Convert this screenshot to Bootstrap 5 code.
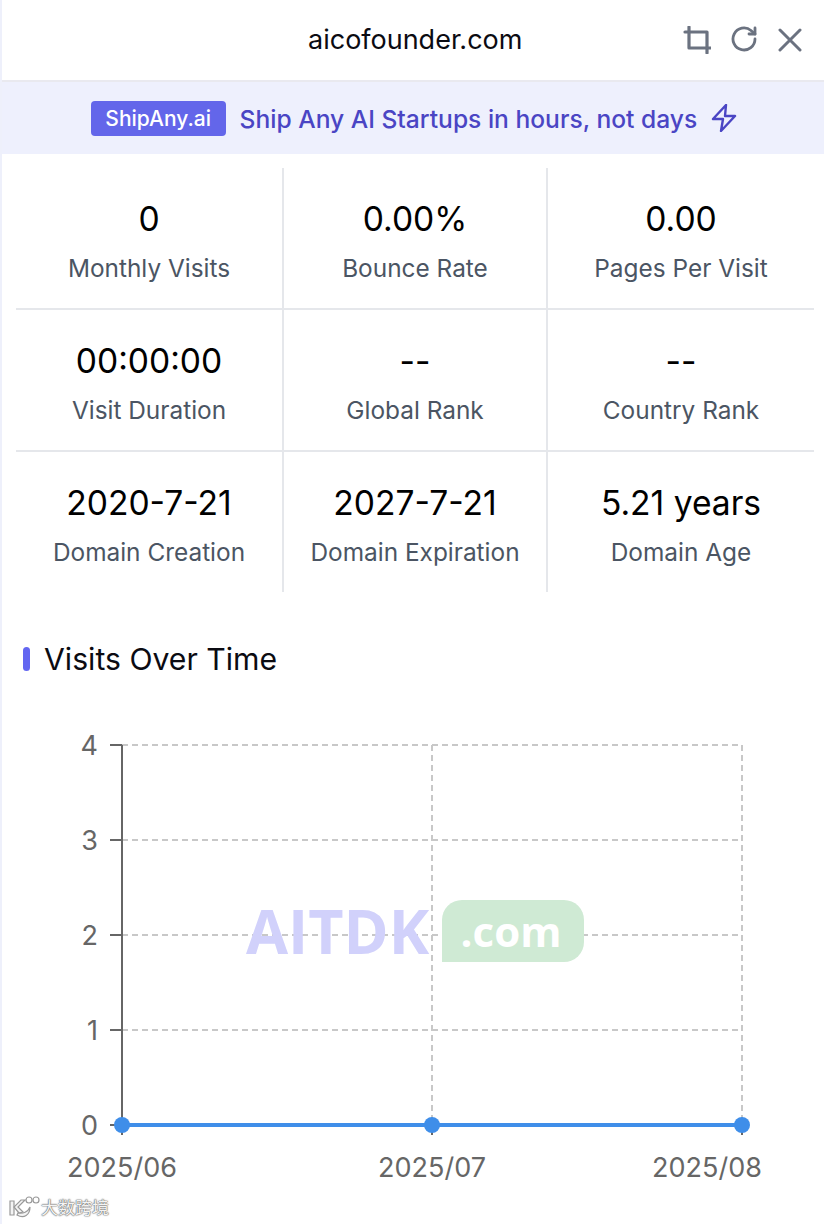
<!DOCTYPE html>
<html lang="en">

<head>
    <meta charset="utf-8">
    <title>aicofounder.com</title>
    <link rel="stylesheet" href="https://cdn.jsdelivr.net/npm/bootstrap@5.3.0/dist/css/bootstrap.min.css">
    <style>
        html, body { height: 100%; }
        body { font-family: Inter, "Noto Sans", sans-serif; background: #fff; color: #000; overflow: hidden; }
        .shell { position: relative; height: 1224px; border-left: 2px solid #eef0fb; }
        .top-bar { height: 82px; border-bottom: 2px solid #e9e9ef; padding-right: 21px; position: relative; }
        .top-title { position: absolute; left: 306px; top: 24px; font-size: 27px; line-height: 32px; color: #0b0b12; }
        .top-icons { gap: 20px; padding-top: 26px; }
        .promo { height: 72px; background: #eef0fd; gap: 14px; padding-left: 2px; }
        .promo-tag { background: #6366ea; color: #fff; font-size: 21px; font-weight: 500; line-height: 35px; height: 35px; padding: 0 14.5px; border-radius: 4px; }
        .promo-text { color: #4a45c4; font-size: 24.6px; font-weight: 500; line-height: 32px; position: relative; top: 1px; }
        .stats { margin: 14px 10px 0 14px; }
        .stat-row { height: 142px; border-bottom: 2px solid #e5e7eb; }
        .stat-row:last-child { border-bottom: 0; height: 140px; }
        .stat-cell { border-right: 2px solid #e5e7eb; padding-top: 29px; }
        .stat-cell:nth-child(1) { width: 268px; }
        .stat-cell:nth-child(2) { width: 264px; }
        .stat-cell:nth-child(3) { width: 266px; border-right: 0; }
        .stat-num { font-size: 33.6px; line-height: 44px; color: #000; }
        .stat-label { font-size: 24.4px; line-height: 32px; margin-top: 11px; color: #4b5563; }
        .chart-head { margin: 48px 0 0 21px; gap: 14px; }
        .chart-mark { width: 7px; height: 24px; border-radius: 4px; background: #6366f1; }
        .chart-title { font-size: 30.2px; line-height: 38px; color: #0b0b12; }
        .chart-svg { display: block; position: absolute; left: -2px; top: 0; }
        .chart-svg text { font-family: Inter, sans-serif; font-size: 27px; fill: #666; }
        .brand-mark { position: absolute; left: 244px; top: 897px; gap: 14px; font-family: "Open Sans", sans-serif; }
        .brand-name { font-size: 61px; line-height: 68px; font-weight: 700; color: #d1d1fb; width: 182px; white-space: nowrap; }
        .brand-com { width: 142px; height: 62px; padding-right: 4px; background: #cfead4; color: #fff; font-size: 42px; font-weight: 700; line-height: 62px; text-align: center; border-radius: 20px 20px 20px 0; }
        .stamp { position: absolute; left: 6px; top: 1195px; gap: 0; color: #f4f4f4; font-family: "Noto Sans CJK SC", sans-serif; font-size: 17px; line-height: 24px; text-shadow: 0 0 1px #666, 0 0 1px #666, 0 0 2px #888; }
    </style>
</head>

<body>
    <div class="shell">
        <svg class="chart-svg" width="824" height="1224" viewBox="0 0 824 1224">
            <g stroke="#c8c8c8" stroke-width="2" stroke-dasharray="6 4" fill="none">
                <path d="M122 745H742" />
                <path d="M122 840H742" />
                <path d="M122 935H742" />
                <path d="M122 1030H742" />
                <path d="M432 745V1125" />
                <path d="M742 745V1125" />
            </g>
            <g stroke="#666" stroke-width="2" fill="none">
                <path d="M122 745V1135" />
                <path d="M110 745H122M110 840H122M110 935H122M110 1030H122M110 1125H122" />
                <path d="M432 1125V1135M742 1125V1135" />
            </g>
            <path d="M122 1125H742" stroke="#3f8ee9" stroke-width="4" fill="none" />
            <circle cx="122" cy="1125" r="8" fill="#3f8ee9" />
            <circle cx="432" cy="1125" r="8" fill="#3f8ee9" />
            <circle cx="742" cy="1125" r="8" fill="#3f8ee9" />
            <g text-anchor="end">
                <text x="98" y="755">4</text>
                <text x="98" y="850">3</text>
                <text x="98" y="945">2</text>
                <text x="98" y="1040">1</text>
                <text x="98" y="1135">0</text>
            </g>
            <g text-anchor="middle">
                <text x="122" y="1177">2025/06</text>
                <text x="432" y="1177">2025/07</text>
                <text x="707" y="1177">2025/08</text>
            </g>
        </svg>

        <div class="top-bar d-flex justify-content-end">
            <div class="top-title">aicofounder.com</div>
            <div class="top-icons d-flex align-items-start">
                <svg width="28" height="28" viewBox="0 0 28 28" fill="none" stroke="#6b7280" stroke-width="3.2" stroke-linecap="round" stroke-linejoin="round"><path d="M2 6H24V27" /><path d="M6 1V22H28" /></svg>
                <svg width="26" height="26" viewBox="0 0 26 26" fill="none" stroke="#6b7280" stroke-width="2.8" stroke-linecap="round" stroke-linejoin="round"><path d="M24 13A11 11 0 1 1 20 4.5L24 8" /><path d="M24 2V8H18" /></svg>
                <svg width="26" height="26" viewBox="0 0 26 26" fill="none" stroke="#6b7280" stroke-width="3" stroke-linecap="round"><path d="M3 4L23 24M23 4L3 24" /></svg>
            </div>
        </div>

        <div class="promo d-flex align-items-center justify-content-center">
            <span class="promo-tag">ShipAny.ai</span>
            <span class="promo-text">Ship Any AI Startups in hours, not days</span>
            <svg width="26" height="28" viewBox="0 0 26 28" fill="none" stroke="#4a45c4" stroke-width="2.4" stroke-linejoin="round"><path d="M15 1L2 15H12L10 27L24 12H14Z" /></svg>
        </div>

        <div class="stats">
            <div class="stat-row d-flex text-center">
                <div class="stat-cell"><div class="stat-num">0</div><div class="stat-label">Monthly Visits</div></div>
                <div class="stat-cell"><div class="stat-num">0.00%</div><div class="stat-label">Bounce Rate</div></div>
                <div class="stat-cell"><div class="stat-num">0.00</div><div class="stat-label">Pages Per Visit</div></div>
            </div>
            <div class="stat-row d-flex text-center">
                <div class="stat-cell"><div class="stat-num">00:00:00</div><div class="stat-label">Visit Duration</div></div>
                <div class="stat-cell"><div class="stat-num">--</div><div class="stat-label">Global Rank</div></div>
                <div class="stat-cell"><div class="stat-num">--</div><div class="stat-label">Country Rank</div></div>
            </div>
            <div class="stat-row d-flex text-center">
                <div class="stat-cell"><div class="stat-num">2020-7-21</div><div class="stat-label">Domain Creation</div></div>
                <div class="stat-cell"><div class="stat-num">2027-7-21</div><div class="stat-label">Domain Expiration</div></div>
                <div class="stat-cell"><div class="stat-num">5.21 years</div><div class="stat-label">Domain Age</div></div>
            </div>
        </div>

        <div class="chart-head d-flex align-items-center">
            <span class="chart-mark"></span>
            <span class="chart-title">Visits Over Time</span>
        </div>

        <div class="brand-mark d-flex align-items-center">
            <span class="brand-name">AITDK</span>
            <span class="brand-com">.com</span>
        </div>

        <div class="stamp d-flex align-items-center">
            <svg width="33" height="24" viewBox="0 0 33 24" fill="#f4f4f4" stroke="#999" stroke-width="1.2"><path d="M2 6H6V20H2Z" /><path d="M13 5L17 5L10 12L15 17L11 18L6 12Z" /><path d="M9 20C16 24 22 20 22 12C20 17 15 19 10 18Z" /><circle cx="21" cy="5" r="3" fill="none" /><circle cx="28" cy="5" r="3" fill="none" /></svg>
            <span>大数跨境</span>
        </div>
    </div>

    <script src="https://cdn.jsdelivr.net/npm/bootstrap@5.3.0/dist/js/bootstrap.bundle.min.js"></script>
</body>

</html>
